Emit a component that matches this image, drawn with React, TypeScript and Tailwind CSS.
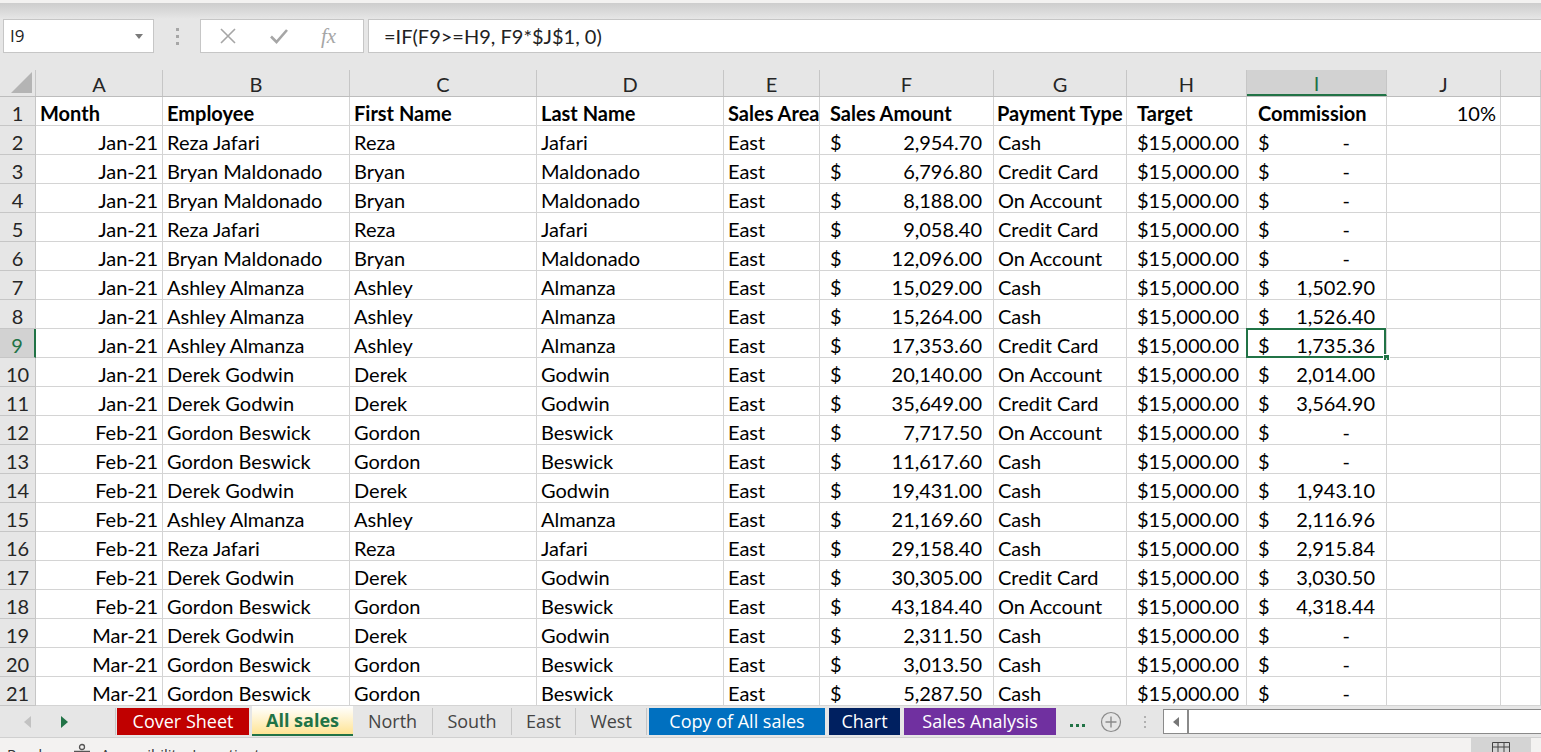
import React from "react";

type DataRow = [string, string, string, string, string, string];

// month, first, last, amount, payment, commission
const rows: DataRow[] = [
  ["Jan-21", "Reza", "Jafari", "2,954.70", "Cash", "-"],
  ["Jan-21", "Bryan", "Maldonado", "6,796.80", "Credit Card", "-"],
  ["Jan-21", "Bryan", "Maldonado", "8,188.00", "On Account", "-"],
  ["Jan-21", "Reza", "Jafari", "9,058.40", "Credit Card", "-"],
  ["Jan-21", "Bryan", "Maldonado", "12,096.00", "On Account", "-"],
  ["Jan-21", "Ashley", "Almanza", "15,029.00", "Cash", "1,502.90"],
  ["Jan-21", "Ashley", "Almanza", "15,264.00", "Cash", "1,526.40"],
  ["Jan-21", "Ashley", "Almanza", "17,353.60", "Credit Card", "1,735.36"],
  ["Jan-21", "Derek", "Godwin", "20,140.00", "On Account", "2,014.00"],
  ["Jan-21", "Derek", "Godwin", "35,649.00", "Credit Card", "3,564.90"],
  ["Feb-21", "Gordon", "Beswick", "7,717.50", "On Account", "-"],
  ["Feb-21", "Gordon", "Beswick", "11,617.60", "Cash", "-"],
  ["Feb-21", "Derek", "Godwin", "19,431.00", "Cash", "1,943.10"],
  ["Feb-21", "Ashley", "Almanza", "21,169.60", "Cash", "2,116.96"],
  ["Feb-21", "Reza", "Jafari", "29,158.40", "Cash", "2,915.84"],
  ["Feb-21", "Derek", "Godwin", "30,305.00", "Credit Card", "3,030.50"],
  ["Feb-21", "Gordon", "Beswick", "43,184.40", "On Account", "4,318.44"],
  ["Mar-21", "Derek", "Godwin", "2,311.50", "Cash", "-"],
  ["Mar-21", "Gordon", "Beswick", "3,013.50", "Cash", "-"],
  ["Mar-21", "Gordon", "Beswick", "5,287.50", "Cash", "-"],
];

const headers: [string, string][] = [
  ["Month", "pl-[4px]"],
  ["Employee", "pl-[4px]"],
  ["First Name", "pl-[4px]"],
  ["Last Name", "pl-[4px]"],
  ["Sales Area", "pl-[4px]"],
  ["Sales Amount", "pl-[10px]"],
  ["Payment Type", "pl-[3px]"],
  ["Target", "pl-[10px]"],
  ["Commission", "pl-[11px]"],
];

const gridCols =
  "grid grid-cols-[36px_127px_187px_187px_187px_96px_174px_133px_120px_140px_114px_1fr]";

const cell = "h-[29px] border-r border-b border-[#d4d4d4] flex items-center pt-[3px] whitespace-nowrap overflow-hidden";

function FormulaBar() {
  return (
    <div>
      <div className="h-[3px] bg-[#f3f2f1]" />
      <div className="h-[16px] bg-gradient-to-b from-[#cdcdcd] to-[#e6e6e6]" />
      <div className="h-[34px] flex">
        <div className="ml-[3px] w-[151px] bg-white border border-[#c6c6c6] flex items-center justify-between pl-[6px] pr-[10px]">
          <span className="font-['Open_Sans',sans-serif] text-[17px] text-[#222]">I9</span>
          <svg width="8" height="5" viewBox="0 0 8 5">
            <path d="M0 0h8L4 5z" fill="#7a7a7a" />
          </svg>
        </div>
        <div className="w-[46px] flex flex-col items-center justify-center gap-[4px]">
          <span className="w-[3px] h-[3px] bg-[#a6a6a6]" />
          <span className="w-[3px] h-[3px] bg-[#a6a6a6]" />
          <span className="w-[3px] h-[3px] bg-[#a6a6a6]" />
        </div>
        <div className="w-[164px] bg-white border border-[#c6c6c6] flex items-center pl-[18px] gap-[32px]">
          <svg width="18" height="18" viewBox="0 0 18 18">
            <path d="M2 2L16 16M16 2L2 16" stroke="#a6a6a6" strokeWidth="1.6" fill="none" />
          </svg>
          <svg width="20" height="18" viewBox="0 0 20 18">
            <path d="M2 9.5L7.5 15L18 3" stroke="#a6a6a6" strokeWidth="2.6" fill="none" />
          </svg>
          <span className="font-['Liberation_Serif',serif] italic text-[21px] text-[#a6a6a6] leading-none">
            fx
          </span>
        </div>
        <div className="ml-[4px] flex-1 bg-white border-y border-l border-[#c6c6c6] flex items-center pl-[15px]">
          <span className="text-[20px] text-[#222]">=IF(F9&gt;=H9, F9*$J$1, 0)</span>
        </div>
      </div>
      <div className="h-[17px]" />
    </div>
  );
}

function ColumnHeaders() {
  const letters = ["A", "B", "C", "D", "E", "F", "G", "H", "I", "J", ""];
  return (
    <div className={`${gridCols} h-[27px] bg-[#e6e6e6] border-b border-[#bdbdbd] leading-none`}>
      <div className="border-r border-[#c6c6c6] relative">
        <svg className="absolute right-[3px] bottom-[3px]" width="21" height="21" viewBox="0 0 21 21">
          <path d="M21 0V21H0z" fill="#b4b4b4" />
        </svg>
      </div>
      {letters.map((l, i) =>
        l === "I" ? (
          <div
            key={i}
            className="bg-[#d2d2d2] border-r border-[#c6c6c6] border-b-2 border-b-[#217346] flex items-center justify-center text-[20px] text-[#217346] pt-[2px]"
          >
            {l}
          </div>
        ) : (
          <div
            key={i}
            className="border-r border-[#c6c6c6] flex items-center justify-center text-[20px] text-[#262626] pt-[1px]"
          >
            {l}
          </div>
        )
      )}
    </div>
  );
}

function RowHeader({ n }: { n: number }) {
  if (n === 9) {
    return (
      <div className="h-[29px] bg-[#d2d2d2] border-r-2 border-r-[#217346] border-b border-b-[#c6c6c6] flex items-center justify-center pt-[3px] text-[20px] text-[#217346]">
        {n}
      </div>
    );
  }
  return (
    <div className="h-[29px] bg-[#e6e6e6] border-r border-b border-[#c6c6c6] flex items-center justify-center pt-[3px] text-[20px] text-[#262626]">
      {n}
    </div>
  );
}

function Money({ value }: { value: string }) {
  return (
    <div className={`${cell} justify-between pl-[10px] pr-[11px]`}>
      <span>$</span>
      <span>{value}</span>
    </div>
  );
}

function Sheet() {
  return (
    <div className="bg-white">
      <ColumnHeaders />
      <div className={gridCols}>
        <RowHeader n={1} />
        {headers.map(([h, pad]) => (
          <div key={h} className={`${cell} ${pad} font-bold`}>
            {h}
          </div>
        ))}
        <div className={`${cell} justify-end pr-[4px]`}>10%</div>
        <div className={cell} />

        {rows.map((r, i) => {
          const n = i + 2;
          return (
            <React.Fragment key={n}>
              <RowHeader n={n} />
              <div className={`${cell} justify-end pr-[4px]`}>{r[0]}</div>
              <div className={`${cell} pl-[4px]`}>{`${r[1]} ${r[2]}`}</div>
              <div className={`${cell} pl-[4px]`}>{r[1]}</div>
              <div className={`${cell} pl-[4px]`}>{r[2]}</div>
              <div className={`${cell} pl-[4px]`}>East</div>
              <Money value={r[3]} />
              <div className={`${cell} pl-[4px]`}>{r[4]}</div>
              <div className={`${cell} justify-between pl-[10px] pr-[11px]`}>
                <span>$</span>
                <span>15,000.00</span>
              </div>
              <div className={`${cell} relative overflow-visible justify-between pl-[11px] ${r[5] === "-" ? "pr-[36px]" : "pr-[11px]"}`}>
                <span>$</span>
                <span>{r[5]}</span>
                {n === 9 && (
                  <>
                    <span className="absolute -top-[1px] -left-[1px] right-0 -bottom-[1px] border-2 border-[#217346]" />
                    <span className="absolute -right-[4px] -bottom-[4px] w-[7px] h-[7px] bg-[#217346] border border-white" />
                  </>
                )}
              </div>
              <div className={cell} />
              <div className={cell} />
            </React.Fragment>
          );
        })}
      </div>
    </div>
  );
}

function Tab({
  label,
  w,
  cls,
}: {
  label: string;
  w: string;
  cls: string;
}) {
  return (
    <div className={`${w} h-[27px] flex items-center justify-center whitespace-nowrap ${cls}`}>{label}</div>
  );
}

function Sep() {
  return <div className="w-px h-[27px] bg-[#c6c6c6]" />;
}

function TabBar() {
  return (
    <div className="h-[33px] bg-[#e6e6e6] flex items-start font-['Open_Sans',sans-serif] text-[18px]">
      <div className="w-[115px] h-[31px] flex items-center">
        <svg className="ml-[24px]" width="7" height="12" viewBox="0 0 7 12">
          <path d="M7 0V12L0 6z" fill="#c2c2c2" />
        </svg>
        <svg className="ml-[30px]" width="7" height="12" viewBox="0 0 7 12">
          <path d="M0 0V12L7 6z" fill="#217346" />
        </svg>
      </div>
      <div className="mt-[2px] flex items-start">
        <Sep />
        <div className="w-[1px]" />
        <Tab label="Cover Sheet" w="w-[132px]" cls="bg-[#c00000] text-white" />
        <div className="w-[3px]" />
        <div className="-mt-[2px] w-[101px] h-[30px] flex items-center justify-center bg-gradient-to-b from-white to-[#ffe493] border-b-2 border-[#217346] font-bold text-[#217346]">
          All sales
        </div>
        <Tab label="North" w="w-[79px]" cls="text-[#444]" />
        <Sep />
        <Tab label="South" w="w-[78px]" cls="text-[#444]" />
        <Sep />
        <Tab label="East" w="w-[63px]" cls="text-[#444]" />
        <Sep />
        <Tab label="West" w="w-[70px]" cls="text-[#444]" />
        <Sep />
        <div className="w-[2px]" />
        <Tab label="Copy of All sales" w="w-[176px]" cls="bg-[#0070c0] text-white" />
        <div className="w-[4px]" />
        <Tab label="Chart" w="w-[71px]" cls="bg-[#002060] text-white" />
        <div className="w-[4px]" />
        <Tab label="Sales Analysis" w="w-[152px]" cls="bg-[#7030a0] text-white" />
        <div className="w-[14px]" />
        <div className="h-[27px] flex items-center gap-[3px] pt-[8px]">
          <span className="w-[3px] h-[3px] bg-[#217346]" />
          <span className="w-[3px] h-[3px] bg-[#217346]" />
          <span className="w-[3px] h-[3px] bg-[#217346]" />
        </div>
        <svg className="ml-[15px] mt-[3px]" width="22" height="22" viewBox="0 0 22 22">
          <circle cx="11" cy="11" r="9.5" stroke="#8a8a8a" strokeWidth="1.2" fill="none" />
          <path d="M11 5.5V16.5M5.5 11H16.5" stroke="#8a8a8a" strokeWidth="1.4" />
        </svg>
        <div className="ml-[22px] h-[27px] flex flex-col items-center justify-center gap-[3px]">
          <span className="w-[2px] h-[2px] bg-[#b0b0b0]" />
          <span className="w-[2px] h-[2px] bg-[#b0b0b0]" />
          <span className="w-[2px] h-[2px] bg-[#b0b0b0]" />
        </div>
      </div>
      <div className="ml-[17px] mt-[3px] flex-1 h-[25px] bg-white border border-[#8a8a8a] border-r-0 flex">
        <div className="w-[25px] border-r-2 border-[#8a8a8a] flex items-center justify-center">
          <svg width="6" height="10" viewBox="0 0 6 10">
            <path d="M6 0V10L0 5z" fill="#777" />
          </svg>
        </div>
      </div>
    </div>
  );
}

function StatusBar() {
  return (
    <div className="flex-1 bg-[#f3f2f1] border-t border-[#d0d0d0] flex items-start font-['Open_Sans',sans-serif] text-[15px] leading-none text-[#333]">
      <span className="ml-[7px] mt-[9px]">Ready</span>
      <svg className="ml-[22px] mt-[5px]" width="20" height="20" viewBox="0 0 20 20">
        <circle cx="10" cy="4" r="2.5" stroke="#555" strokeWidth="1.3" fill="none" />
        <path d="M2 8.5h16M10 8.5v5l-3 5M10 13.5l3 5" stroke="#555" strokeWidth="1.3" fill="none" />
      </svg>
      <span className="ml-[9px] mt-[9px]">Accessibility: Investigate</span>
      <div className="ml-auto mr-[10px] w-[60px] h-[30px] bg-[#d4d4d4] flex justify-center pt-[4px]">
        <svg width="18" height="14" viewBox="0 0 18 14">
          <path d="M0.5 0.5h17v13h-17zM0.5 5h17M6 0.5v13M12 0.5v13" stroke="#444" fill="none" />
        </svg>
      </div>
    </div>
  );
}

export default function App() {
  return (
    <div className="w-[1541px] h-[752px] overflow-hidden bg-[#e6e6e6] flex flex-col font-['Lato',sans-serif] text-[20px] text-black">
      <FormulaBar />
      <Sheet />
      <TabBar />
      <StatusBar />
    </div>
  );
}
